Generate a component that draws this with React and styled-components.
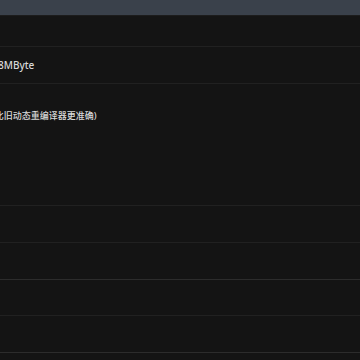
import React from 'react';
import styled, { createGlobalStyle } from 'styled-components';

const GlobalStyle = createGlobalStyle`
    html, body {
        margin: 0;
        padding: 0;
        background: #141414;
        overflow: hidden;
    }
    body {
        font-family: "Noto Sans", "Noto Sans CJK SC", sans-serif;
    }
`;

const Page = styled.div`
    width: 360px;
    height: 360px;
    background: #141414;
    overflow: hidden;
`;

const Header = styled.div`
    height: 15px;
    background: #3a414b;
    border-bottom: 1px solid #1c1c1c;
`;

const Row = styled.div`
    height: ${(props) => props.height}px;
    border-bottom: 1px solid ${(props) => (props.bright ? '#2c2c2c' : '#212121')};
    display: flex;
    align-items: ${(props) => (props.top ? 'flex-start' : 'center')};
    padding-top: ${(props) => (props.top ? 27 : 0)}px;
    overflow: hidden;
`;

const Value = styled.span`
    margin-left: ${(props) => props.shift}px;
    color: #d8d8d8;
    font-size: ${(props) => props.size}px;
    font-weight: 500;
    white-space: nowrap;
    line-height: 1;
`;

const rows = [
    { height: 30 },
    { height: 36, text: '8MByte', shift: -2, size: 10 },
    { height: 94, top: true, text: '(比旧动态重编译器更准确)', shift: -8, size: 9 },
    { height: 36, bright: false },
    { height: 36, bright: true },
    { height: 35, bright: false },
    { height: 36, bright: true },
    { height: 36 },
];

const App = () => (
    <Page>
        <GlobalStyle />
        <Header />
        {rows.map((row, i) => (
            <Row key={i} height={row.height} bright={row.bright} top={row.top}>
                {row.text && (
                    <Value shift={row.shift} size={row.size}>
                        {row.text}
                    </Value>
                )}
            </Row>
        ))}
    </Page>
);

export default App;
